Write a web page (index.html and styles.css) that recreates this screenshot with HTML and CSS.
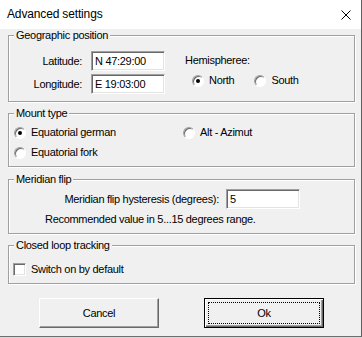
FILE: index.html
```html
<!DOCTYPE html>
<html>
<head>
<meta charset="utf-8">
<link rel="stylesheet" href="styles.css">
</head>
<body>
<div class="window">
  <div class="titlebar">
    <span class="title">Advanced settings</span>
    <svg class="close" width="10" height="10" viewBox="0 0 10 10"><path d="M0.5 0.5 L9.5 9.5 M9.5 0.5 L0.5 9.5" stroke="#000" stroke-width="1" fill="none"/></svg>
  </div>
  <fieldset class="group">
    <legend>Geographic position</legend>
    <div class="geo">
      <div class="coords">
        <span class="lbl">Latitude:</span><span class="edit w74">N 47:29:00</span>
        <span class="lbl">Longitude:</span><span class="edit w74">E 19:03:00</span>
      </div>
      <div class="hemi">
        <span class="txt">Hemispheree:</span>
        <div class="hemi-row">
          <span class="opt"><span class="radio on"></span>North</span>
          <span class="opt"><span class="radio"></span>South</span>
        </div>
      </div>
    </div>
  </fieldset>
  <fieldset class="group g2">
    <legend>Mount type</legend>
    <div class="mount">
      <span class="opt"><span class="radio on"></span>Equatorial german</span>
      <span class="opt"><span class="radio"></span>Alt - Azimut</span>
      <span class="opt"><span class="radio"></span>Equatorial fork</span>
    </div>
  </fieldset>
  <fieldset class="group g3">
    <legend>Meridian flip</legend>
    <div class="flip">
      <span class="lbl">Meridian flip hysteresis (degrees):</span><span class="edit w74">5</span>
    </div>
    <div class="hint">Recommended value in 5...15 degrees range.</div>
  </fieldset>
  <fieldset class="group g4">
    <legend>Closed loop tracking</legend>
    <div class="loop">
      <span class="opt"><span class="check"></span>Switch on by default</span>
    </div>
  </fieldset>
  <div class="buttons">
    <span class="btn">Cancel</span>
    <span class="btn default"><span class="focus">Ok</span></span>
  </div>
</div>
</body>
</html>
```
FILE: styles.css
```css
* { box-sizing: border-box; }
html, body { margin: 0; padding: 0; }
body {
  width: 362px;
  height: 338px;
  background: #d8d8d8;
  font-family: "Liberation Sans", Arial, sans-serif;
  font-size: 11px;
  letter-spacing: -0.3px;
  color: #000;
  overflow: hidden;
}
.window {
  width: 362px;
  height: 337px;
  background: #f0f0f0;
  border-right: 1px solid #5f5f5f;
  border-bottom: 1px solid #6e6e6e;
}
.titlebar {
  height: 29px;
  background: #fff;
  display: flex;
  align-items: center;
  justify-content: space-between;
  padding: 0 10px 0 7px;
}
.title {
  font-size: 12px;
  letter-spacing: -0.15px;
  line-height: 29px;
}
.close { display: block; }

.group {
  margin: 0 6px 0 8px;
  padding: 0;
  border: 1px solid #a0a0a0;
  box-shadow: 1px 1px 0 #fff, inset 1px 1px 0 #fff;
  min-width: 0;
}
.group legend {
  margin-left: 5px;
  padding: 0 2px;
  line-height: 13px;
  background: #f0f0f0;
}
.g2 { margin-top: 5px; }
.g3 { margin-top: 6px; }
.g4 { margin-top: 5px; }

.lbl { text-align: right; line-height: 13px; }
.txt { line-height: 13px; }

.edit {
  display: block;
  height: 20px;
  background: #fff;
  border-top: 1px solid #a0a0a0;
  border-left: 1px solid #a0a0a0;
  border-bottom: 1px solid #fff;
  border-right: 1px solid #fff;
  box-shadow: inset 1px 1px 0 #696969, inset -1px -1px 0 #e3e3e3;
  padding: 2px 0 0 3px;
  line-height: 14px;
}
.w74 { width: 74px; }

.geo {
  display: flex;
  padding: 9px 0 7px 0;
}
.coords {
  display: grid;
  grid-template-columns: 73px 74px;
  column-gap: 9px;
  row-gap: 3px;
  align-items: center;
}
.hemi {
  margin-left: 20px;
  padding-top: 3px;
  display: flex;
  flex-direction: column;
  gap: 7px;
}
.hemi-row {
  display: flex;
  gap: 20px;
  padding-left: 7px;
}

.opt {
  display: flex;
  align-items: center;
  line-height: 13px;
  white-space: nowrap;
}
.radio {
  position: relative;
  width: 12px;
  height: 12px;
  border-radius: 50%;
  background: #fff;
  border: 1px solid;
  border-color: #a0a0a0 #fff #fff #a0a0a0;
  box-shadow: inset 1px 1px 0 #696969;
  margin-right: 5px;
  flex: none;
}
.radio.on::after {
  content: "";
  position: absolute;
  left: 3px;
  top: 3px;
  width: 4px;
  height: 4px;
  border-radius: 50%;
  background: #000;
}
.check {
  width: 13px;
  height: 13px;
  background: #fff;
  border: 1px solid;
  border-color: #a0a0a0 #fff #fff #a0a0a0;
  box-shadow: inset 1px 1px 0 #696969, inset -1px -1px 0 #e3e3e3;
  margin-right: 5px;
  flex: none;
}

.mount {
  display: grid;
  grid-template-columns: 169px auto;
  row-gap: 7px;
  padding: 6px 0 7px 5px;
}

.flip {
  display: grid;
  grid-template-columns: 210px 74px;
  column-gap: 7px;
  align-items: center;
  padding-top: 3px;
}
.hint {
  line-height: 13px;
  padding: 4px 0 7px 36px;
}

.loop {
  padding: 11px 0 7px 4px;
}

.buttons {
  display: flex;
  gap: 45px;
  padding-left: 39px;
  margin-top: 14px;
}
.btn {
  width: 120px;
  height: 30px;
  display: flex;
  align-items: center;
  justify-content: center;
  background: #f0f0f0;
  border-top: 1px solid #fff;
  border-left: 1px solid #fff;
  border-right: 1px solid #696969;
  border-bottom: 1px solid #696969;
  box-shadow: inset -1px -1px 0 #a0a0a0;
}
.btn.default {
  border: 1px solid #000;
  box-shadow: inset 1px 1px 0 #fff, inset -1px -1px 0 #696969, inset -2px -2px 0 #a0a0a0;
  padding: 3px;
}
.focus {
  width: 100%;
  height: 100%;
  display: flex;
  align-items: center;
  justify-content: center;
  border: 1px dotted #000;
}
```
